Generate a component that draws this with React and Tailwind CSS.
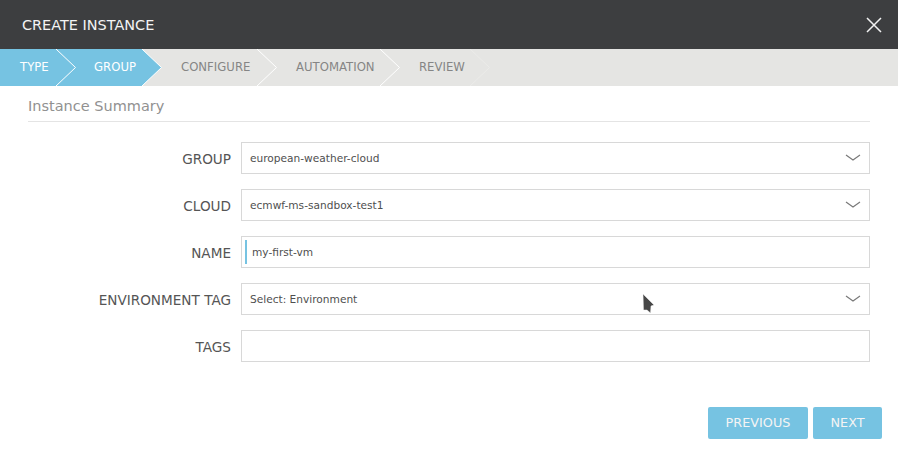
import React from "react";

const steps = [
  { label: "TYPE", width: "w-[57px]", pad: "pl-5", active: true },
  { label: "GROUP", width: "w-[86px]", pad: "pl-[37px]", active: true, tip: true },
  { label: "CONFIGURE", width: "w-[115px]", pad: "pl-[38px]" },
  { label: "AUTOMATION", width: "w-[123px]", pad: "pl-[38px]" },
  { label: "REVIEW", width: "w-[90px]", pad: "pl-[38px]", faint: true },
];

const fields = [
  { label: "GROUP", value: "european-weather-cloud", select: true },
  { label: "CLOUD", value: "ecmwf-ms-sandbox-test1", select: true },
  { label: "NAME", value: "my-first-vm", focused: true },
  { label: "ENVIRONMENT TAG", value: "Select: Environment", select: true },
  { label: "TAGS", value: "" },
];

const Step = ({ step }) => (
  <div
    className={`relative h-full flex items-center shrink-0 ${step.width} ${step.pad} ${
      step.active ? "bg-[#76c3e2] text-white" : "text-[#858585]"
    }`}
  >
    <span className="text-[11.7px] leading-none">{step.label}</span>
    <svg
      className="absolute top-0 left-[calc(100%-1px)] z-10"
      width="21"
      height="37"
      viewBox="0 0 21 37"
    >
      {step.active && <path d="M0 0L19.5 18.5L0 37Z" fill="#76c3e2" />}
      <path
        d="M0 0L19.5 18.5L0 37"
        fill="none"
        stroke={step.faint ? "#ebebe9" : "#ffffff"}
        strokeWidth="1"
      />
    </svg>
  </div>
);

const Field = ({ field }) => (
  <div className="flex items-center h-8">
    <label className="w-[231px] pt-0.5 text-right text-[13.6px] text-[#555555]">{field.label}</label>
    <div className="relative ml-2.5 w-[629px] h-8 flex items-center border border-[#d8d8d8] bg-white text-[10.6px] text-[#4f4f4f]">
      {field.focused ? (
        <>
          <span className="ml-[3px] w-0.5 h-6 bg-[#76c3e2]" />
          <span className="ml-[5px] pt-0.5">{field.value}</span>
        </>
      ) : (
        <span className="ml-2 pt-0.5">{field.value}</span>
      )}
      {field.select && (
        <svg className="absolute right-[8px] top-[11px]" width="16" height="8" viewBox="0 0 16 8">
          <path d="M1 1L8 6L15 1" fill="none" stroke="#7a7a7a" strokeWidth="1.2" />
        </svg>
      )}
    </div>
  </div>
);

export default function App() {
  return (
    <div className="relative w-[898px] h-[451px] bg-white overflow-hidden font-['DejaVu_Sans',sans-serif]">
      {/* Header */}
      <div className="h-[49px] bg-[#3d3e40] flex items-center justify-between pl-[22px] pr-[15px]">
        <h1 className="pt-0.5 text-[14.45px] text-[#f4f4f4] font-normal leading-none">CREATE INSTANCE</h1>
        <svg width="18" height="18" viewBox="0 0 18 18">
          <path d="M2 2L16 16M16 2L2 16" stroke="#f2f2f2" strokeWidth="1.5" fill="none" />
        </svg>
      </div>

      {/* Wizard steps */}
      <div className="h-[37px] bg-[#e5e5e3] flex">
        {steps.map((step) => (
          <Step key={step.label} step={step} />
        ))}
      </div>

      {/* Form */}
      <div className="pl-7 pr-7">
        <h2 className="h-9 flex items-center pt-[7px] text-[14.5px] text-[#919191] font-normal border-b border-[#e4e4e4]">
          Instance Summary
        </h2>
        <div className="-ml-7 mt-5 flex flex-col gap-[15px]">
          {fields.map((field) => (
            <Field key={field.label} field={field} />
          ))}
        </div>
      </div>

      {/* Footer buttons */}
      <div className="flex justify-end gap-[5px] pr-4 mt-[45px]">
        <button className="w-[100px] h-8 rounded-[2px] bg-[#76c3e2] text-[#f4f4f4] text-[12.8px]">PREVIOUS</button>
        <button className="w-[69px] h-8 rounded-[2px] bg-[#76c3e2] text-[#f4f4f4] text-[12.8px]">NEXT</button>
      </div>

      {/* Mouse pointer */}
      <svg className="absolute left-[641px] top-[292px]" width="16" height="24" viewBox="0 0 16 24">
        <path d="M2 2L13 13L10 14L9.5 21L6 18L2.5 18Z" fill="#474747" stroke="#f2f2f2" strokeWidth="0.5" />
      </svg>
    </div>
  );
}
